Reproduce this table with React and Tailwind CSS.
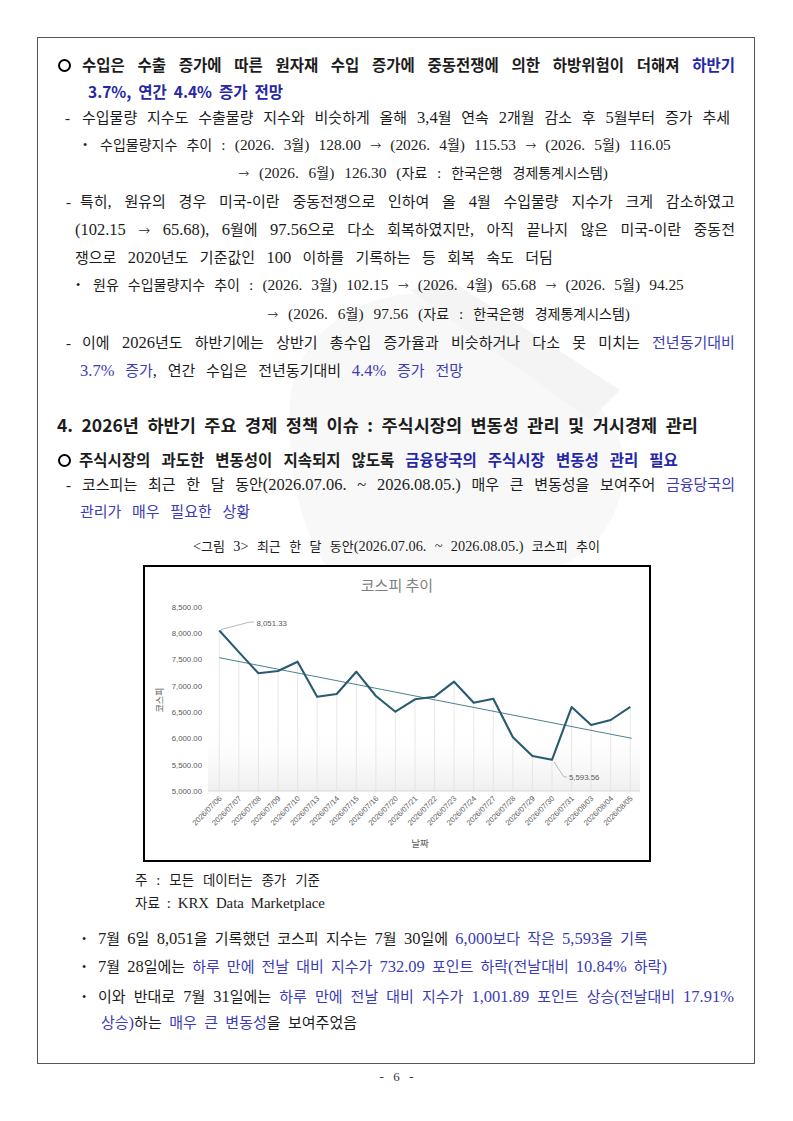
import { twMerge } from "tailwind-merge";

const BL = "text-[#3b3bb6]"; // regular blue
const BBL = "text-[#2626a6]"; // bold blue
const BOLD = "font-['Noto_Sans_CJK_KR',sans-serif] font-bold";
const HANGUL = /([\u1100-\u11FF\u3130-\u318F\uAC00-\uD7A3]+)/;

// split segments into words, keep colour pieces together when no space between
function toWords(segs) {
  const out = [[]];
  segs.forEach((s) => {
    const [text, cls] = typeof s === "string" ? [s, ""] : s;
    text.split(" ").forEach((w, i) => {
      if (i > 0) out.push([]);
      if (w) out[out.length - 1].push([w, cls]);
    });
  });
  return out.filter((w) => w.length);
}

// latin runs of the serif body are set a bit larger, like the document font
function Piece({ t, latin }) {
  if (t === "→") return <span className="font-['Roboto','DejaVu_Sans',sans-serif] text-[0.95em] font-light">→</span>;
  if (!latin) return t;
  return t
    .split(HANGUL)
    .filter(Boolean)
    .map((r, i) => (HANGUL.test(r) ? r : <span key={i} className="text-[1.1em]">{r}</span>));
}

function Words({ segs, className, latin = true }) {
  return (
    <div className={twMerge("flex items-baseline justify-between whitespace-nowrap", className)}>
      {toWords(segs).map((w, i) => (
        <span key={i}>
          {w.map(([t, c], j) => (
            <span key={j} className={c}>
              <Piece t={t} latin={latin} />
            </span>
          ))}
        </span>
      ))}
    </div>
  );
}

function Row({ className, children }) {
  return <div className={twMerge("flex h-[26px] items-center", className)}>{children}</div>;
}

const Ring = ({ className }) => (
  <span className={twMerge("size-[13px] shrink-0 rounded-full border-[2.5px] border-black", className)} />
);

const kospi = [
  ["07/06", 8051.33],
  ["07/07", 7640],
  ["07/08", 7238],
  ["07/09", 7281],
  ["07/10", 7458],
  ["07/13", 6793],
  ["07/14", 6844],
  ["07/15", 7268],
  ["07/16", 6806],
  ["07/20", 6508],
  ["07/21", 6743],
  ["07/22", 6793],
  ["07/23", 7078],
  ["07/24", 6679],
  ["07/27", 6753.6],
  ["07/28", 6021.5],
  ["07/29", 5665],
  ["07/30", 5593.56],
  ["07/31", 6595.45],
  ["08/03", 6255],
  ["08/04", 6350],
  ["08/05", 6600],
];

const xOf = (i) => 219.3 + i * 19.57;
const yOf = (v) => 791 - (v - 5000) * 0.0526;

function KospiChart() {
  const pts = kospi.map(([, v], i) => `${xOf(i).toFixed(1)},${yOf(v).toFixed(1)}`).join(" ");
  const ticks = [8500, 8000, 7500, 7000, 6500, 6000, 5500, 5000];
  const lab = { fill: "#595959", fontFamily: "'Liberation Sans', 'Noto Sans CJK KR', sans-serif" };
  return (
    <svg width="504" height="293" viewBox="145 567 504 293" className="block">
      <defs>
        <linearGradient id="shade" x1="0" y1="0" x2="0" y2="1">
          <stop offset="0" stopColor="#ffffff" stopOpacity="0" />
          <stop offset="1" stopColor="#efefef" />
        </linearGradient>
      </defs>
      <rect x="208" y="722" width="432" height="69" fill="url(#shade)" />
      <text x="397" y="591" textAnchor="middle" fontSize="15" fill="#7f7f7f" fontFamily="'Noto Sans CJK KR', sans-serif">
        코스피 추이
      </text>
      {ticks.map((t) => (
        <text key={t} x="202" y={yOf(t) + 2.8} textAnchor="end" fontSize="7.8" {...lab}>
          {t.toLocaleString("en-US")}.00
        </text>
      ))}
      {kospi.map(([, v], i) => (
        <line key={i} x1={xOf(i)} x2={xOf(i)} y1={yOf(v)} y2="791" stroke="#e2e2e2" strokeWidth="0.8" />
      ))}
      <line x1="208" x2="640" y1="791" y2="791" stroke="#d9d9d9" strokeWidth="1" />
      <line x1="219.3" y1="657.7" x2="631.7" y2="738.3" stroke="#4f7f90" strokeWidth="1" />
      <polyline points={pts} fill="none" stroke="#285a70" strokeWidth="2.1" strokeLinejoin="round" />
      <polyline points="221,629.5 250,622 254,622" fill="none" stroke="#a6a6a6" strokeWidth="0.8" />
      <text x="256.5" y="625.8" fontSize="7.8" {...lab}>
        8,051.33
      </text>
      <polyline points="554,762 564,777 567,777" fill="none" stroke="#a6a6a6" strokeWidth="0.8" />
      <text x="569" y="780" fontSize="7.8" {...lab}>
        5,593.56
      </text>
      {kospi.map(([d], i) => (
        <text
          key={d}
          transform={`translate(${(xOf(i) + 3).toFixed(1)} 799) rotate(-45)`}
          textAnchor="end"
          fontSize="7.6"
          {...lab}
        >
          2026/{d}
        </text>
      ))}
      <text transform="translate(163 700) rotate(-90)" textAnchor="middle" fontSize="9" {...lab}>
        코스피
      </text>
      <text x="420" y="847" textAnchor="middle" fontSize="9.5" {...lab}>
        날짜
      </text>
    </svg>
  );
}

export default function App() {
  return (
    <div className="relative isolate h-[1121px] w-[793px] overflow-hidden bg-white pt-[37px] font-['Liberation_Serif','Noto_Sans_CJK_KR',serif] text-[15px] text-[#1c1c1c]">
      {/* faint watermark behind the text */}
      <svg className="absolute left-0 top-0 -z-10" width="793" height="1121">
        <path
          d="M290 410 C 290 330, 370 285, 440 295 C 500 305, 580 370, 615 430 C 640 480, 610 560, 540 572 L 330 572 C 300 530, 288 470, 290 410 Z"
          fill="#f8f8f8"
        />
        <path d="M410 290 L 450 280 L 620 390 L 590 420 Z" fill="#f4f4f4" />
      </svg>

      <div className="ml-[37px] h-[1027px] w-[718px] border border-[#555] pt-[14px]">
        <Row className={BOLD + " text-[15.5px]"}>
          <Ring className="ml-[20px] mr-[11px]" />
          <Words
            latin={false}
            className="w-[653px]"
            segs={["수입은 수출 증가에 따른 원자재 수입 증가에 중동전쟁에 의한 하방위험이 더해져 ", ["하반기", BBL]]}
          />
        </Row>
        <Row className={BOLD + " mt-px text-[15.5px]"}>
          <Words latin={false} className={"ml-[50px] w-[195px] " + BBL} segs={["3.7%, 연간 4.4% 증가 전망"]} />
        </Row>
        <Row>
          <span className="ml-[27px] w-[17px] shrink-0">-</span>
          <Words
            className="w-[648px]"
            segs={["수입물량 지수도 수출물량 지수와 비슷하게 올해 3,4월 연속 2개월 감소 후 5월부터 증가 추세"]}
          />
        </Row>
        <Row className="mt-px text-[14px]">
          <span className="ml-[45px] w-[17px] shrink-0 text-[12px]">•</span>
          <Words
            className="w-[571px]"
            segs={["수입물량지수 추이 : (2026. 3월) 128.00 → (2026. 4월) 115.53 → (2026. 5월) 116.05"]}
          />
        </Row>
        <Row className="mt-[2px] text-[14px]">
          <Words className="ml-[200px] w-[370px]" segs={["→ (2026. 6월) 126.30 (자료 : 한국은행 경제통계시스템)"]} />
        </Row>
        <Row className="mt-[3px]">
          <span className="ml-[28px] w-[14px] shrink-0">-</span>
          <Words
            className="w-[655px]"
            segs={["특히, 원유의 경우 미국-이란 중동전쟁으로 인하여 올 4월 수입물량 지수가 크게 감소하였고"]}
          />
        </Row>
        <Row className="mt-[2px]">
          <Words
            className="ml-[37px] w-[660px]"
            segs={["(102.15 → 65.68), 6월에 97.56으로 다소 회복하였지만, 아직 끝나지 않은 미국-이란 중동전"]}
          />
        </Row>
        <Row className="mt-[2px]">
          <Words className="ml-[37px] w-[478px]" segs={["쟁으로 2020년도 기준값인 100 이하를 기록하는 등 회복 속도 더딤"]} />
        </Row>
        <Row className="mt-px text-[14px]">
          <span className="ml-[38px] w-[17px] shrink-0 text-[12px]">•</span>
          <Words
            className="w-[591px]"
            segs={["원유 수입물량지수 추이 : (2026. 3월) 102.15 → (2026. 4월) 65.68 → (2026. 5월) 94.25"]}
          />
        </Row>
        <Row className="mt-[3px] text-[14px]">
          <Words className="ml-[229px] w-[363px]" segs={["→ (2026. 6월) 97.56 (자료 : 한국은행 경제통계시스템)"]} />
        </Row>
        <Row className="mt-[3px]">
          <span className="ml-[28px] w-[16px] shrink-0">-</span>
          <Words
            className="w-[653px]"
            segs={["이에 2026년도 하반기에는 상반기 총수입 증가율과 비슷하거나 다소 못 미치는 ", ["전년동기대비", BL]]}
          />
        </Row>
        <Row className="mt-[2px]">
          <Words
            className="ml-[42px] w-[383px]"
            segs={[["3.7% 증가", BL], ", 연간 수입은 전년동기대비 ", ["4.4% 증가 전망", BL]]}
          />
        </Row>

        <Row className={BOLD + " mt-[28px] text-[17.5px]"}>
          <Words
            latin={false}
            className="ml-[19px] w-[641px]"
            segs={["4. 2026년 하반기 주요 경제 정책 이슈 : 주식시장의 변동성 관리 및 거시경제 관리"]}
          />
        </Row>
        <Row className={BOLD + " mt-[9px] text-[15.5px]"}>
          <Ring className="ml-[20px] mr-[8px]" />
          <Words
            latin={false}
            className="w-[599px]"
            segs={["주식시장의 과도한 변동성이 지속되지 않도록 ", ["금융당국의 주식시장 변동성 관리 필요", BBL]]}
          />
        </Row>
        <Row className="-mt-px">
          <span className="ml-[28px] w-[16px] shrink-0">-</span>
          <Words
            className="w-[653px]"
            segs={["코스피는 최근 한 달 동안(2026.07.06. ~ 2026.08.05.) 매우 큰 변동성을 보여주어 ", ["금융당국의", BL]]}
          />
        </Row>
        <Row className="mt-px">
          <Words className={"ml-[42px] w-[170px] " + BL} segs={["관리가 매우 필요한 상황"]} />
        </Row>

        <Row className="mt-[9px] text-[13px]">
          <Words className="ml-[155px] w-[407px]" segs={["<그림 3> 최근 한 달 동안(2026.07.06. ~ 2026.08.05.) 코스피 추이"]} />
        </Row>
        <div className="ml-[105px] mt-[5px] h-[297px] w-[508px] border-2 border-black bg-white">
          <KospiChart />
        </div>
        <Row className="mt-[6px] h-[24px] text-[13.5px]">
          <Words className="ml-[97px] w-[185px]" segs={["주 :  모든 데이터는 종가 기준"]} />
        </Row>
        <Row className="h-[22px] text-[13.5px]">
          <Words className="ml-[97px] w-[190px]" segs={["자료 : KRX Data Marketplace"]} />
        </Row>

        <Row className="mt-[12px]">
          <span className="ml-[44px] w-[16px] shrink-0 text-[12px]">•</span>
          <Words
            className="w-[550px]"
            segs={["7월 6일 8,051을 기록했던 코스피 지수는 7월 30일에 ", ["6,000보다 작은 5,593을 기록", BL]]}
          />
        </Row>
        <Row className="mt-[2px]">
          <span className="ml-[44px] w-[16px] shrink-0 text-[12px]">•</span>
          <Words
            className="w-[569px]"
            segs={["7월 28일에는 ", ["하루 만에 전날 대비 지수가 732.09 포인트 하락(전날대비 10.84% 하락)", BL]]}
          />
        </Row>
        <Row className="mt-[4px]">
          <span className="ml-[44px] w-[16px] shrink-0 text-[12px]">•</span>
          <Words
            className="w-[636px]"
            segs={["이와 반대로 7월 31일에는 ", ["하루 만에 전날 대비 지수가 1,001.89 포인트 상승(전날대비 17.91%", BL]]}
          />
        </Row>
        <Row>
          <Words
            className="ml-[63px] w-[256px]"
            segs={[["상승)", BL], "하는 ", ["매우 큰 변동성", BL], "을 보여주었음"]}
          />
        </Row>
      </div>
      <div className="mx-auto mt-[3px] flex h-[20px] w-[34px] items-center justify-between text-[13px] text-[#333]">
        <span>-</span>
        <span>6</span>
        <span>-</span>
      </div>
    </div>
  );
}
